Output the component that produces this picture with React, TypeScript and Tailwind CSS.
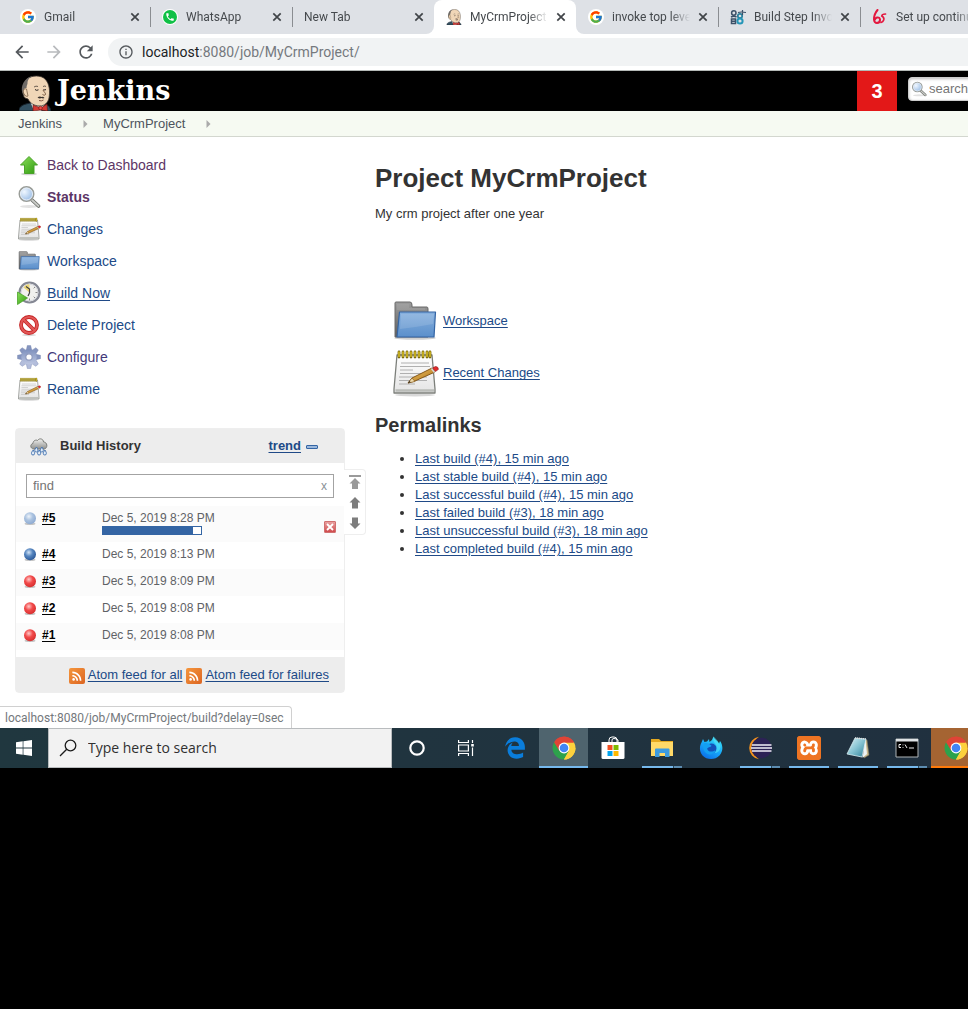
import React from "react";
import { FcGoogle } from "react-icons/fc";
import { FaEdgeLegacy } from "react-icons/fa";
import { MdArrowBack, MdArrowForward, MdRefresh, MdInfoOutline, MdPhone, MdRssFeed } from "react-icons/md";
import { SiXampp } from "react-icons/si";

type IconProps = { className?: string };

/* Gradients shared by all drawings on the page */
function Gradients() {
  return (
    <svg width="0" height="0" className="absolute" aria-hidden="true">
      <defs>
        <linearGradient id="green" x1="0" y1="0" x2="1" y2="1">
          <stop offset="0" stopColor="#8be05a" />
          <stop offset="1" stopColor="#2f9a10" />
        </linearGradient>
        <linearGradient id="folder" x1="0" y1="0" x2="0" y2="1">
          <stop offset="0" stopColor="#86b0de" />
          <stop offset="1" stopColor="#5b8fcb" />
        </linearGradient>
        <linearGradient id="grayFolder" x1="0" y1="0" x2="0" y2="1">
          <stop offset="0" stopColor="#9c9c9c" />
          <stop offset="1" stopColor="#5d5d5d" />
        </linearGradient>
        <linearGradient id="paper" x1="0" y1="0" x2="0" y2="1">
          <stop offset="0" stopColor="#ffffff" />
          <stop offset="1" stopColor="#e4e4e4" />
        </linearGradient>
        <linearGradient id="gear" x1="0" y1="0" x2="0" y2="1">
          <stop offset="0" stopColor="#7d90bd" />
          <stop offset="1" stopColor="#bfc8e2" />
        </linearGradient>
        <linearGradient id="cloud" x1="0" y1="0" x2="0" y2="1">
          <stop offset="0" stopColor="#f2f2f0" />
          <stop offset="1" stopColor="#8e8f8c" />
        </linearGradient>
        <linearGradient id="fox" x1="0.8" y1="0" x2="0.2" y2="1">
          <stop offset="0" stopColor="#3ae3f5" />
          <stop offset="0.5" stopColor="#18a8fa" />
          <stop offset="1" stopColor="#0a6ae6" />
        </linearGradient>
        <linearGradient id="note" x1="0" y1="0" x2="1" y2="1">
          <stop offset="0" stopColor="#e2f5f8" />
          <stop offset="0.5" stopColor="#86c3d2" />
          <stop offset="1" stopColor="#2b7f98" />
        </linearGradient>
        <radialGradient id="lens" cx="0.35" cy="0.35" r="0.75">
          <stop offset="0" stopColor="#f0f7ff" />
          <stop offset="1" stopColor="#8fb5e2" />
        </radialGradient>
        <radialGradient id="redBall" cx="0.4" cy="0.35" r="0.65">
          <stop offset="0" stopColor="#ffc9c9" />
          <stop offset="0.5" stopColor="#f24a4a" />
          <stop offset="1" stopColor="#d83030" />
        </radialGradient>
        <radialGradient id="blueBall" cx="0.4" cy="0.35" r="0.65">
          <stop offset="0" stopColor="#d3e4f6" />
          <stop offset="0.5" stopColor="#5585bf" />
          <stop offset="1" stopColor="#2f5b9a" />
        </radialGradient>
        <radialGradient id="paleBall" cx="0.4" cy="0.35" r="0.65">
          <stop offset="0" stopColor="#edf3fa" />
          <stop offset="0.5" stopColor="#abc3e0" />
          <stop offset="1" stopColor="#8fabd2" />
        </radialGradient>
        <linearGradient id="pencil" x1="0" y1="0" x2="1" y2="1">
          <stop offset="0" stopColor="#f4c86b" />
          <stop offset="1" stopColor="#a86d13" />
        </linearGradient>
      </defs>
    </svg>
  );
}

function Butler({ className }: IconProps) {
  return (
    <svg viewBox="0 0 32 36" className={className} aria-hidden="true">
      <path d="M0 36c0-4 3-6 7-7l8-2 9 2c4 0 7 2 8 7z" fill="#335061" stroke="#16222b" strokeWidth="1" />
      <path d="M11 26l4 10h7l5-9-6-3z" fill="#f4f4f4" />
      <path d="M6 23C2 19 4 9 8 4c5-4 14-4 18 0 5 5 5 13 4 19-1 5-5 8-9 8-6 0-10-3-12-7z" fill="#f0d6b7" stroke="#3c352f" strokeWidth=".8" />
      <path d="M6 21C1 18 2 8 8 3.500 10 2 12 1 14 1c-3 1-5 3-5.500 6 .5 2-1 3-1 6-2-.500-3 1-2 4z" fill="#6e6a66" />
      <path d="M7.500 14c-3-1-4 2-2.500 5 1 2 3 3 4 2z" fill="#f0d6b7" stroke="#6a5139" strokeWidth=".7" />
      <path d="M15 12q2-1.500 4-.5M24 11.500q2-1 3 0" stroke="#4a4038" strokeWidth=".8" fill="none" />
      <path d="M16 14.500q1.500 1.500 3.500.3M24.500 14.500q1.500 1 2.500 0" stroke="#231f20" strokeWidth="1" fill="none" />
      <path d="M24 15c1 2 3 3.500 2.500 4.500s-2 .7-3 0" stroke="#6a4a32" strokeWidth=".9" fill="none" />
      <path d="M18.500 22.500q2-1.800 4-.6 1.800-.6 3 1.200-1.500.8-3 0-2 1.200-4-.6z" fill="#3b332e" />
      <path d="M20 25.500q2.500 1 4.500-.5" stroke="#7c4a38" strokeWidth=".9" fill="none" />
      <path d="M14 30l8 3 6-4 .5 7-6.500-1-8 1z" fill="#d33833" stroke="#5e1512" strokeWidth=".6" />
      <circle cx="21.500" cy="33" r="1.800" fill="#f04b48" stroke="#5e1512" strokeWidth=".6" />
    </svg>
  );
}

function Magnifier({ className }: IconProps) {
  return (
    <svg viewBox="0 0 24 24" className={className} aria-hidden="true">
      <ellipse cx="12" cy="21.500" rx="9" ry="1.500" fill="#e2e2e2" />
      <path d="M15 15l6.500 6" stroke="#6d706b" strokeWidth="3.600" strokeLinecap="round" />
      <path d="M15 15l6.500 6" stroke="#c9cbc7" strokeWidth="1.800" strokeLinecap="round" />
      <circle cx="9.500" cy="9" r="7.200" fill="url(#lens)" stroke="#9a9d98" strokeWidth="1.600" />
      <circle cx="9.500" cy="9" r="6" fill="none" stroke="#e8eef5" strokeWidth="1" />
    </svg>
  );
}

function UpArrow({ className }: IconProps) {
  return (
    <svg viewBox="0 0 24 24" className={className} aria-hidden="true">
      <ellipse cx="12" cy="21" rx="8" ry="1.300" fill="#d2d2d2" />
      <path d="M12 3.500l8.500 8.500H17v8.500H7.500V12H3.500z" fill="url(#green)" stroke="#4ba32a" strokeWidth="1" strokeLinejoin="round" />
    </svg>
  );
}

function Notepad({ className }: IconProps) {
  return (
    <svg viewBox="0 0 48 48" className={className} aria-hidden="true">
      <ellipse cx="24" cy="46" rx="20" ry="1.500" fill="#d8d8d8" />
      <path d="M6 6h35l3 34v4H3v-4z" fill="url(#paper)" stroke="#7c7f7a" strokeWidth="1.300" strokeLinejoin="round" />
      <path d="M4.500 41.500h38.500" stroke="#babcb8" strokeWidth="2.400" />
      <path d="M10 14h28M9 17.500h30M9 21h13M9 24.500h30M8 28h28M8 31.500h28M8 35h16" stroke="#b0b0b0" strokeWidth="1" />
      <path d="M8 3v5M12 3v5M16 3v5M20 3v5M24 3v5M28 3v5M32 3v5M36 3v5M39 3v5" stroke="#75640a" strokeWidth="2.800" strokeLinecap="round" />
      <path d="M8 3v4.500M12 3v4.500M16 3v4.500M20 3v4.500M24 3v4.500M28 3v4.500M32 3v4.500M36 3v4.500M39 3v4.500" stroke="#ead02a" strokeWidth="1.300" strokeLinecap="round" />
      <path d="M17 34l4-5 20-10 3 4-20 9z" fill="url(#pencil)" stroke="#7a4d0e" strokeWidth=".9" strokeLinejoin="round" />
      <path d="M17 34l4-5 3 3.500z" fill="#f0dcae" stroke="#7a4d0e" strokeWidth=".6" />
      <path d="M17 34l1.500-2 1.200 1.200z" fill="#222" />
      <path d="M41.500 19l3-1.500q2.500-.3 3 2.800l-3 2.200z" fill="#e02a2a" stroke="#8b1212" strokeWidth=".6" />
      <path d="M40.500 19.500l3 4" stroke="#d5d5d5" strokeWidth="1.600" />
    </svg>
  );
}

function Folder({ className }: IconProps) {
  return (
    <svg viewBox="0 0 48 48" className={className} aria-hidden="true">
      <ellipse cx="24" cy="41" rx="21" ry="1.800" fill="#d0d0d0" />
      <path d="M4 40V6q0-1 1-1h14q2 0 2 3v2h15q1 0 1 2v28z" fill="url(#grayFolder)" stroke="#6a6a6a" strokeWidth="1" />
      <path d="M6 8h12M6 12h28M6 10h12" stroke="#b0b0b0" strokeWidth=".7" />
      <path d="M8.500 15h36l-1.500 25H6z" fill="url(#folder)" stroke="#3465a4" strokeWidth="1.200" strokeLinejoin="round" />
      <path d="M10 17h33l-1 10Q26 30 9 32z" fill="#ffffff" opacity=".13" />
    </svg>
  );
}

function ClockPlay({ className }: IconProps) {
  return (
    <svg viewBox="0 0 24 24" className={className} aria-hidden="true">
      <circle cx="12.500" cy="11.500" r="10" fill="#f1f1ee" stroke="#858894" strokeWidth="2.200" />
      <circle cx="12.500" cy="11.500" r="8.300" fill="none" stroke="#d6d8df" strokeWidth="1" />
      <path d="M12.500 11.500L6.500 6.500q3-4 6-3z" fill="#ecd676" />
      <path d="M12.500 12V8L9 5.500M12.500 12l-1.500 3" stroke="#3f3f3f" strokeWidth="1.200" fill="none" />
      <path d="M12.500 17.500v2M18.500 11.500h2M16.700 7.300l1.300-1.300M16.700 15.700l1.300 1.300" stroke="#888" strokeWidth="1" />
      <path d="M.5 11l10 6-10 6.500z" fill="url(#green)" stroke="#4ba32a" strokeWidth=".8" />
    </svg>
  );
}

function Forbidden({ className }: IconProps) {
  return (
    <svg viewBox="0 0 24 24" className={className} aria-hidden="true">
      <ellipse cx="12" cy="22" rx="7" ry="1.200" fill="#d8d8d8" />
      <circle cx="12" cy="12" r="8" fill="#fff" stroke="#c42222" strokeWidth="3.800" />
      <path d="M6.500 6.500l11 11" stroke="#c42222" strokeWidth="3.800" />
      <circle cx="12" cy="12" r="8" fill="none" stroke="#e25757" strokeWidth="2.200" />
      <path d="M6.500 6.500l11 11" stroke="#e25757" strokeWidth="2.200" />
    </svg>
  );
}

function Gear({ className }: IconProps) {
  const teeth = [0, 45, 90, 135, 180, 225, 270, 315];
  return (
    <svg viewBox="0 0 24 24" className={className} aria-hidden="true">
      {teeth.map((a) => (
        <path key={a} d="M9.300 5l1-4.500h3.400l1 4.500z" fill={a > 90 && a < 270 ? "#b3bddb" : "#8595bf"} stroke="#7484ad" strokeWidth=".4" transform={`rotate(${a} 12 12)`} />
      ))}
      <circle cx="12" cy="12" r="7.800" fill="url(#gear)" />
      <circle cx="12" cy="12" r="3.200" fill="#fff" stroke="#8d99bd" strokeWidth="1.200" />
    </svg>
  );
}

function RainCloud({ className }: IconProps) {
  return (
    <svg viewBox="0 0 18 18" className={className} aria-hidden="true">
      <path d="M3.500 11C0 10.500 0 6 3 5.500c0-3 3-4 4.500-3 2-3 6-1.500 6 1.500 4 0 4.500 6 1 7z" fill="url(#cloud)" stroke="#7a7c78" strokeWidth="1" />
      {["M3.200 12", "M9.300 12", "M15 12", "M6.500 9", "M12 9"].map((p) => (
        <path key={p} d={`${p}q-2.200 2.500-1.700 3.700a1.500 1.300 0 0 0 3 0q.4-1-1.300-3.700z`} fill="#e3edf8" stroke="#3f6fae" strokeWidth=".9" />
      ))}
    </svg>
  );
}

function Ball({ tone }: { tone: "pale" | "blue" | "red" }) {
  const fill = tone === "pale" ? "url(#paleBall)" : tone === "blue" ? "url(#blueBall)" : "url(#redBall)";
  return (
    <svg viewBox="0 0 14 14" className="size-3.5 shrink-0" aria-hidden="true">
      <ellipse cx="7" cy="12.800" rx="5.500" ry="1.200" fill="#c5c5c5" />
      <circle cx="7" cy="7.200" r="6" fill={fill} />
    </svg>
  );
}

function Chrome({ className }: IconProps) {
  return (
    <svg viewBox="0 0 48 48" className={className} aria-hidden="true">
      <path d="M24 24L4.100 12.500A23 23 0 0 1 43.900 12.500z" fill="#e04436" />
      <path d="M24 24L43.900 12.500A23 23 0 0 1 24 47z" fill="#fdd13d" />
      <path d="M24 24v23A23 23 0 0 1 4.100 12.500z" fill="#2da24c" />
      <path d="M24 13h20.200L34 30z" fill="#fdd13d" />
      <path d="M4.100 12.500L14.500 29.500 24 24V13z" fill="#e04436" />
      <path d="M24 47l10-17.500-10 5-9.500-5z" fill="#2da24c" />
      <path d="M24 47l10-17.500 8-6L47 24A23 23 0 0 1 24 47z" fill="#fdd13d" />
      <path d="M24 13h20.200l-.3-.5A23 23 0 0 0 8 8L16 17z" fill="#e04436" />
      <circle cx="24" cy="24" r="10.800" fill="#fff" />
      <circle cx="24" cy="24" r="8.600" fill="#4285f4" />
    </svg>
  );
}

function Firefox({ className }: IconProps) {
  return (
    <svg viewBox="0 0 24 24" className={className} aria-hidden="true">
      <path d="M14.500.5c.5 3 4 4 5.500 7l1-2.500C24 9 24.500 15 20.500 19.500 16 24.500 7.500 24 3.500 19.500 0 15.500.5 10 2.500 6.500L4 3l1.500 3q1-.5 2.500-.5L10 3l.5 3q3-1.500 4-5.500z" fill="url(#fox)" />
      <circle cx="12.500" cy="12.500" r="5" fill="#1450b8" />
      <path d="M4.500 7.500c3-1.500 6 .3 8 2.300-1 2-4 1.200-4.300 3.200 1 3 5 3.500 8.300 1-1 5-7.500 6-10.500 2-2-2.500-2-5.500-1.500-8.500z" fill="#149ff2" />
      <path d="M14.500.5q-1 5 2 7.500 3 4-1 9 5 0 6-6 .2-3-1.500-3.500-1-3-5.500-7z" fill="#58e8fb" opacity=".55" />
    </svg>
  );
}

function Eclipse({ className }: IconProps) {
  return (
    <svg viewBox="0 0 24 24" className={className} aria-hidden="true">
      <path d="M11 .8A11.300 11.300 0 0 0 11 23.200Q4 18 4 12T11 .8z" fill="#f7941e" />
      <circle cx="13.500" cy="12" r="10.300" fill="#2c2255" />
      <path d="M4 9h19.500M3 12h21M4 15h19.500" stroke="#f1eff8" strokeWidth="1.700" />
    </svg>
  );
}

function Store({ className }: IconProps) {
  return (
    <svg viewBox="0 0 24 24" className={className} aria-hidden="true">
      <path d="M8 7V4q0-3 3-3h2q3 0 3 3v3M11 6V4q0-1.500 2-1.500T17 4v2" fill="none" stroke="#fff" strokeWidth="1" />
      <path d="M.5 6h23v15.500q0 1.500-1.500 1.500H2Q.5 23 .5 21.500z" fill="#fff" />
      <path d="M6.500 9h5v5h-5z" fill="#f25022" />
      <path d="M12.500 9h5v5h-5z" fill="#7fba00" />
      <path d="M6.500 15h5v5h-5z" fill="#00a4ef" />
      <path d="M12.500 15h5v5h-5z" fill="#ffb900" />
    </svg>
  );
}

function Explorer({ className }: IconProps) {
  return (
    <svg viewBox="0 0 24 24" className={className} aria-hidden="true">
      <path d="M1 3h8l2 2h12v15H1z" fill="#e5a920" />
      <path d="M1 6h22v14H1z" fill="#ffd968" />
      <path d="M5 21v-7.500q0-1 1-1h12.500q1 0 1 1V21h-4.500v-4H9.500v4z" fill="#3d9be0" />
    </svg>
  );
}

function NotepadApp({ className }: IconProps) {
  return (
    <svg viewBox="0 0 24 24" className={className} aria-hidden="true">
      <path d="M17 4l4 0 2 15-5 3z" fill="#c9b98c" stroke="#77705a" strokeWidth=".6" />
      <path d="M9 2l11 1-4 18L1 18z" fill="url(#note)" stroke="#d5edf2" strokeWidth=".8" />
      <path d="M19.500 4l-3 18 4.500-4z" fill="#eef4f5" />
      <path d="M9 2l11 1" stroke="#dddddd" strokeWidth="1.500" strokeDasharray="1 1" />
    </svg>
  );
}

function Terminal({ className }: IconProps) {
  return (
    <svg viewBox="0 0 24 24" className={className} aria-hidden="true">
      <path d="M1 3h22v18H1z" fill="#000" stroke="#aeb4b7" strokeWidth="1" />
      <path d="M1 3h22v2.500H1z" fill="#dfe3e5" />
      <path d="M6 8.500H4v3h2M8 8.500v.8M8 11v.8M10 8.500l2 3.500M14 12h5" stroke="#f0f0f0" strokeWidth="1" fill="none" />
    </svg>
  );
}

function WhatsApp() {
  return (
    <span className="flex size-4 items-center justify-center rounded-full bg-white">
      <span className="flex size-3.5 items-center justify-center rounded-full bg-[#10c046]">
        <MdPhone className="size-2.5 text-white" />
      </span>
    </span>
  );
}

function GoogleMark() {
  return (
    <span className="flex size-4 items-center justify-center rounded-full bg-white">
      <FcGoogle className="size-3.5" />
    </span>
  );
}

function CommunityMark() {
  return (
    <svg viewBox="0 0 16 16" className="size-4" fill="none" aria-hidden="true">
      <circle cx="3.800" cy="4" r="2.200" stroke="#3c5068" strokeWidth="1.500" />
      <path d="M1 8q3-1.500 5.500 0M1.500 10h4v4.500h-4zM1.500 12.200h4" stroke="#3c5068" strokeWidth="1.500" />
      <circle cx="10" cy="7" r="2.200" stroke="#2a7f9c" strokeWidth="1.700" />
      <circle cx="10" cy="12" r="2.600" stroke="#2596b8" strokeWidth="2" />
      <path d="M8 3.500q3-1 8 0M12.500 1v5" stroke="#3c5068" strokeWidth="1.200" />
    </svg>
  );
}

function RedSixMark() {
  return (
    <svg viewBox="0 0 16 16" className="size-4" fill="none" stroke="#e3173e" strokeLinecap="round" aria-hidden="true">
      <path d="M5.500 1Q2 5 2 10.500q.3 3.500 3 3.500 3.200-.3 3-3.500-.3-2.500-3-2-1.500.5-2 2" strokeWidth="2" />
      <path d="M13.500 5Q10 5 9.800 7q2.700 1.500 1.900 4-.7 2-2.700 2.500" strokeWidth="1.700" />
    </svg>
  );
}

type TabData = { title: string; icon?: React.ReactNode; line?: boolean };

function Tab({ title, icon, line }: TabData) {
  return (
    <div className="flex h-full w-[142px] shrink-0 items-center">
      <span className={line ? "h-5 w-px bg-[#8a8d91]" : "h-5 w-px"} />
      <div className="flex min-w-0 flex-1 items-center gap-2 pr-[10px] pl-[11px]">
        {icon && <span className="shrink-0">{icon}</span>}
        <span className="min-w-0 flex-1 text-xs whitespace-nowrap text-[#45494d] [mask-image:linear-gradient(to_right,black_75%,transparent)]">
          {title}
        </span>
        <button aria-label={`Close ${title}`} className="flex size-[10px] shrink-0 items-center justify-center">
          <svg viewBox="0 0 10 10" className="size-[10px]" aria-hidden="true">
            <path d="M1.300 1.300l7.400 7.400M8.700 1.300L1.300 8.700" stroke="#404448" strokeWidth="1.700" />
          </svg>
        </button>
      </div>
    </div>
  );
}

function Browser() {
  return (
    <div className="font-[Roboto,'Open_Sans',sans-serif]">
      <div className="flex h-[34px] overflow-hidden bg-white">
        <div className="flex shrink-0 rounded-br-lg bg-[#dee1e6] pl-2">
          <Tab title="Gmail" icon={<GoogleMark />} />
          <Tab title="WhatsApp" icon={<WhatsApp />} line />
          <Tab title="New Tab" line />
        </div>
        <div className="shrink-0 bg-[linear-gradient(#dee1e6_50%,#fff_50%)]">
          <div className="h-full rounded-t-lg bg-white">
            <Tab title="MyCrmProject" icon={<Butler className="size-4" />} />
          </div>
        </div>
        <div className="flex min-w-0 flex-1 rounded-bl-lg bg-[#dee1e6]">
          <Tab title="invoke top leve" icon={<GoogleMark />} />
          <Tab title="Build Step Invo" icon={<CommunityMark />} line />
          <Tab title="Set up continu" icon={<RedSixMark />} line />
        </div>
      </div>
      <div className="flex h-[37px] items-center border-b border-[#b4b9b6] bg-white pl-3">
        <button aria-label="Back"><MdArrowBack className="size-5 text-[#55595d]" /></button>
        <button aria-label="Forward" className="ml-3"><MdArrowForward className="size-5 text-[#b8babd]" /></button>
        <button aria-label="Reload" className="ml-3"><MdRefresh className="size-5 text-[#55595d]" /></button>
        <div className="ml-3 flex h-7 flex-1 items-center gap-2 rounded-l-full bg-[#f1f3f4] pl-[10px]">
          <MdInfoOutline className="size-4 text-[#55595d]" />
          <span className="text-sm text-[#202124]">
            localhost<span className="text-[#75797e]">:8080/job/MyCrmProject/</span>
          </span>
        </div>
      </div>
    </div>
  );
}

function Header() {
  return (
    <header>
      <div className="flex h-10 justify-between overflow-hidden bg-black">
        <a href="#home" className="flex items-start pl-[19px]">
          <Butler className="mt-1 h-9 w-8" />
          <span className="ml-[6px] font-['DejaVu_Serif',serif] text-[27px] leading-10 font-bold text-white">Jenkins</span>
        </a>
        <div className="flex w-[111px] items-start overflow-hidden">
          <a href="#monitors" className="flex h-10 w-10 shrink-0 items-center justify-center bg-[#e31818] text-xl font-bold text-white">3</a>
          <label className="mt-[6px] ml-[11px] flex h-6 w-[190px] shrink-0 items-center rounded-[4px] border border-[#ccc] bg-white pl-[2px] shadow-[inset_0_1px_3px_#bbb]">
            <Magnifier className="size-4" />
            <input aria-label="search" placeholder="search" className="ml-[2px] w-40 bg-transparent text-[13px] outline-none placeholder:text-[#757575]" />
          </label>
        </div>
      </div>
      <nav className="flex h-[26px] items-center border-b border-[#d3d7cf] bg-[#f6faf2] pl-[18px] text-[13px] text-[#4d545d]">
        <a href="#jenkins">Jenkins</a>
        <Crumb />
        <a href="#project" className="ml-[15px]">MyCrmProject</a>
        <Crumb />
      </nav>
    </header>
  );
}

function Crumb() {
  return (
    <svg viewBox="0 0 5 8" className="mt-px ml-[21px] h-2 w-[5px]" aria-hidden="true">
      <path d="M.5 0l4 4-4 4z" fill="#aaaaaa" />
    </svg>
  );
}

const tasks: { label: string; icon: React.ReactNode; style: string }[] = [
  { label: "Back to Dashboard", icon: <UpArrow className="size-6" />, style: "text-[#5c3566]" },
  { label: "Status", icon: <Magnifier className="size-6" />, style: "font-bold text-[#5c3566]" },
  { label: "Changes", icon: <Notepad className="size-6" />, style: "text-[#204a87]" },
  { label: "Workspace", icon: <Folder className="size-6" />, style: "text-[#204a87]" },
  { label: "Build Now", icon: <ClockPlay className="size-6" />, style: "text-[#204a87] underline underline-offset-2" },
  { label: "Delete Project", icon: <Forbidden className="size-6" />, style: "text-[#204a87]" },
  { label: "Configure", icon: <Gear className="size-6" />, style: "text-[#43397a]" },
  { label: "Rename", icon: <Notepad className="size-6" />, style: "text-[#204a87]" },
];

const builds: { id: string; tone: "blue" | "red"; date: string }[] = [
  { id: "#4", tone: "blue", date: "Dec 5, 2019 8:13 PM" },
  { id: "#3", tone: "red", date: "Dec 5, 2019 8:09 PM" },
  { id: "#2", tone: "red", date: "Dec 5, 2019 8:08 PM" },
  { id: "#1", tone: "red", date: "Dec 5, 2019 8:08 PM" },
];

function BuildId({ id, tone }: { id: string; tone: "pale" | "blue" | "red" }) {
  return (
    <span className="flex items-center gap-[5px]">
      <Ball tone={tone} />
      <a href="#build" className="font-bold text-black underline underline-offset-2">{id}</a>
    </span>
  );
}

function Feed({ children }: { children: React.ReactNode }) {
  return (
    <a href="#feed" className="flex items-center gap-[3px] text-[#204a87]">
      <span className="mt-[2px] flex size-4 items-center justify-center rounded-[2px] bg-[linear-gradient(135deg,#f5963c,#dc6522)]">
        <MdRssFeed className="size-3.5 text-white" />
      </span>
      <span className="underline underline-offset-2">{children}</span>
    </a>
  );
}

function BuildHistory() {
  return (
    <section className="relative mt-[23px] ml-[15px] w-[330px] rounded-[4px] border border-[#eeeeee] bg-white">
      <div className="flex h-[34px] items-center bg-[#ededed] pr-[26px] pl-[14px] text-[13px] font-bold">
        <RainCloud className="mt-[2px] size-[18px]" />
        <h2 className="ml-3 flex-1 text-[#333]">Build History</h2>
        <a href="#trend" className="text-[#204a87] underline underline-offset-2">trend</a>
        <button aria-label="Collapse" className="mt-[2px] ml-[5px] h-1 w-3 rounded-[1px] border border-[#3465a4] bg-[#9bb8dc]" />
      </div>
      <label className="mx-[10px] mt-[11px] flex h-6 items-center border border-[#a3a3a3] px-[6px]">
        <input aria-label="find" placeholder="find" className="min-w-0 flex-1 text-[13px] outline-none placeholder:text-[#757575]" />
        <button aria-label="Clear" className="text-xs text-[#8a9096]">x</button>
      </label>
      <table className="mt-2 w-full border-collapse text-xs text-[#5f6266]">
        <tbody>
          <tr className="h-9 bg-[#fbfbfb]">
            <td className="w-[86px] pt-1 pl-[7px] align-top"><BuildId id="#5" tone="pale" /></td>
            <td className="pt-1 align-top">
              <a href="#build">Dec 5, 2019 8:28 PM</a>
              <span className="block h-[9px] w-[100px] border border-[#3465a4] bg-white">
                <span className="block h-full w-[92%] bg-[#3465a4]" />
              </span>
            </td>
            <td className="w-8 pt-[5px] pr-2 align-middle">
              <button aria-label="Stop" className="ml-auto flex size-3 items-center justify-center rounded-[1px] border border-[#d07070] bg-[linear-gradient(#e8a0a0,#d04a4c)]">
                <svg viewBox="0 0 8 8" className="size-2" aria-hidden="true"><path d="M1 1l6 6M7 1L1 7" stroke="#fff" strokeWidth="1.800" /></svg>
              </button>
            </td>
          </tr>
          {builds.map((b, i) => (
            <tr key={b.id} className={i % 2 ? "h-[27px] bg-[#fbfbfb]" : "h-[27px]"}>
              <td className="pt-1 pl-[7px] align-top"><BuildId id={b.id} tone={b.tone} /></td>
              <td className="pt-1 align-top"><a href="#build">{b.date}</a></td>
              <td />
            </tr>
          ))}
        </tbody>
      </table>
      <div className="mt-[7px] flex h-[35px] items-center justify-end gap-1 bg-[#ededed] pr-[15px] text-[13px]">
        <Feed>Atom feed for all</Feed>
        <Feed>Atom feed for failures</Feed>
      </div>
      <div className="absolute top-10 left-full flex h-[66px] w-[22px] flex-col items-center justify-between rounded-r-[4px] border border-l-0 border-[#eeeeee] bg-white py-[5px]">
        <button aria-label="First page" className="flex">
          <svg viewBox="0 0 12 14" className="h-3.5 w-3" aria-hidden="true"><path d="M0 0h12v2H0zM6 3l5.500 5.500H9V14H3V8.500H.5z" fill="#9a9a9a" /></svg>
        </button>
        <button aria-label="Newer builds" className="flex">
          <svg viewBox="0 0 12 12" className="size-3" aria-hidden="true"><path d="M6 0l5.500 5.500H9v6H3v-6H.5z" fill="#7d7d7d" /></svg>
        </button>
        <button aria-label="Older builds" className="flex">
          <svg viewBox="0 0 12 12" className="size-3" aria-hidden="true"><path d="M6 12L.5 6.500H3v-6h6v6h2.500z" fill="#7d7d7d" /></svg>
        </button>
      </div>
    </section>
  );
}

const permalinks = [
  "Last build (#4), 15 min ago",
  "Last stable build (#4), 15 min ago",
  "Last successful build (#4), 15 min ago",
  "Last failed build (#3), 18 min ago",
  "Last unsuccessful build (#3), 18 min ago",
  "Last completed build (#4), 15 min ago",
];

function Page() {
  return (
    <div className="relative flex bg-white pb-[35px]">
      <aside className="w-[360px] shrink-0">
        <ul className="pt-3 pl-[17px]">
          {tasks.map((t) => (
            <li key={t.label} className="flex h-8 items-center">
              <a href="#task" className={`flex items-center gap-[6px] text-sm ${t.style}`}>
                {t.icon}
                {t.label}
              </a>
            </li>
          ))}
        </ul>
        <BuildHistory />
      </aside>
      <main className="min-w-0 flex-1 pt-[26px] pl-[15px] text-[13px] text-[#333]">
        <h1 className="text-[26px] leading-[30px] font-bold">Project MyCrmProject</h1>
        <p className="mt-3 leading-[18px]">My crm project after one year</p>
        <div className="mt-[74px] flex flex-col gap-1 pl-4 text-[#204a87]">
          <a href="#workspace" className="flex items-center gap-1 underline underline-offset-2"><Folder className="size-12" />Workspace</a>
          <a href="#changes" className="flex items-center gap-1 underline underline-offset-2"><Notepad className="size-12" />Recent Changes</a>
        </div>
        <h2 className="mt-4 text-xl leading-6 font-bold">Permalinks</h2>
        <ul className="mt-[13px] list-disc pl-10 leading-[18px]">
          {permalinks.map((p) => (
            <li key={p}><a href="#permalink" className="text-[#204a87] underline underline-offset-2">{p}</a></li>
          ))}
        </ul>
      </main>
      <div className="absolute bottom-0 left-0 flex h-[22px] items-center rounded-tr-[4px] border-t border-r border-[#d0d0d0] bg-white pr-[7px] pl-[5px] font-[Roboto,'Open_Sans',sans-serif] text-xs text-[#74787c]">
        localhost:8080/job/MyCrmProject/build?delay=0sec
      </div>
    </div>
  );
}

type AppData = { name: string; icon: React.ReactNode; bar?: "none" | "single" | "double" | "active" | "alert" };

const apps: AppData[] = [
  { name: "Cortana", icon: <svg viewBox="0 0 16 16" className="size-4"><circle cx="8" cy="8" r="6.700" fill="none" stroke="#fff" strokeWidth="2.200" /></svg> },
  {
    name: "Task View",
    icon: (
      <svg viewBox="0 0 16 16" className="size-4" fill="none" stroke="#fff" strokeWidth="1.200">
        <path d="M.6 0v3M.6 16v-3M10.400 0v3M10.400 16v-3M0 2.500h11M0 13.500h11M.6 5h9.800v6H.6zM14.500 0v3M14.500 7.500V16" />
        <path d="M13.200 4h2.600v2.500h-2.600z" fill="#fff" stroke="none" />
      </svg>
    ),
  },
  { name: "Edge", icon: <FaEdgeLegacy className="size-[22px] text-[#0a7ddb]" /> },
  { name: "Chrome", icon: <Chrome className="size-6" />, bar: "active" },
  { name: "Store", icon: <Store className="size-6" /> },
  { name: "File Explorer", icon: <Explorer className="size-6" />, bar: "double" },
  { name: "Firefox", icon: <Firefox className="size-6" /> },
  { name: "Eclipse", icon: <Eclipse className="size-6" />, bar: "double" },
  {
    name: "XAMPP",
    icon: (
      <span className="flex size-6 items-center justify-center overflow-hidden rounded-[3px] bg-[#ee7423]">
        <span className="flex size-5 items-center justify-center bg-white">
          <SiXampp className="size-6 shrink-0 text-[#ee7423]" />
        </span>
      </span>
    ),
    bar: "single",
  },
  { name: "Notepad", icon: <NotepadApp className="size-6" />, bar: "single" },
  { name: "Command Prompt", icon: <Terminal className="size-6" />, bar: "double" },
  { name: "Chrome profile", icon: <Chrome className="size-6" />, bar: "alert" },
];

const cellStyle = { none: "", single: "", double: "", active: "bg-[#4f646e]", alert: "bg-[#a56432]" };
const barStyle = {
  none: "w-10",
  single: "w-10 bg-[#76b9ed]",
  double: "w-10 bg-[linear-gradient(to_right,#76b9ed_31px,#2b4a5e_31px,#2b4a5e_32px,#5c8cb0_32px)]",
  active: "w-full bg-[#76b9ed]",
  alert: "w-full bg-[#ff7a0a]",
};

function Taskbar() {
  return (
    <footer className="flex h-10 overflow-hidden bg-[linear-gradient(to_right,#20373f,#20303f)] font-['Open_Sans',sans-serif]">
      <button aria-label="Start" className="flex w-12 shrink-0 items-center justify-center">
        <svg viewBox="0 0 16 16" className="size-4" fill="#fff" aria-hidden="true">
          <path d="M0 2.200l6.700-.9v6.300H0zM7.400 1.200L16 0v7.600H7.400zM0 8.400h6.700v6.300L0 13.800zM7.400 8.400H16V16l-8.600-1.200z" />
        </svg>
      </button>
      <label className="flex w-[344px] shrink-0 items-center border border-[#b9bcbe] bg-[#f2f2f2] pl-[10px]">
        <svg viewBox="0 0 18 18" className="size-[18px]" fill="none" stroke="#1c1c1c" strokeWidth="1.300" aria-hidden="true">
          <circle cx="11.500" cy="6.500" r="5.300" />
          <path d="M7.700 10.300L1 17" />
        </svg>
        <input aria-label="Type here to search" placeholder="Type here to search" className="ml-[11px] min-w-0 flex-1 text-sm outline-none placeholder:text-[#303030]" />
      </label>
      {apps.map((a) => (
        <button key={a.name} aria-label={a.name} className={`flex w-[49px] shrink-0 flex-col items-center ${cellStyle[a.bar ?? "none"]}`}>
          <span className="flex flex-1 items-center pt-[2px]">{a.icon}</span>
          <span className={`h-[2px] ${barStyle[a.bar ?? "none"]}`} />
        </button>
      ))}
    </footer>
  );
}

export default function App() {
  return (
    <div className="min-h-screen overflow-hidden bg-black font-['Liberation_Sans',Arial,sans-serif]">
      <Gradients />
      <Browser />
      <Header />
      <Page />
      <Taskbar />
    </div>
  );
}
